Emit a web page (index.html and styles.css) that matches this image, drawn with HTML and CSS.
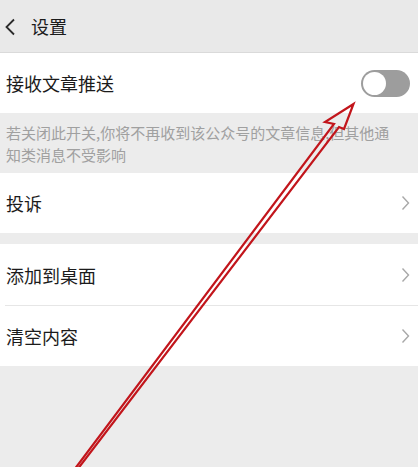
FILE: index.html
```html
<!DOCTYPE html>
<html lang="zh">
<head>
<meta charset="utf-8">
<link rel="stylesheet" href="styles.css">
</head>
<body>
<div class="page">
  <header class="topbar">
    <svg class="back" width="12" height="18" viewBox="0 0 12 18"><path d="M10 1.5 L2.5 9 L10 16.5" fill="none" stroke="#2b2b2b" stroke-width="1.8"/></svg>
    <span class="title">设置</span>
  </header>
  <div class="row">
    <span class="label">接收文章推送</span>
    <span class="toggle"><span class="knob"></span></span>
  </div>
  <div class="note">若关闭此开关,你将不再收到该公众号的文章信息,但其他通<br>知类消息不受影响</div>
  <div class="row">
    <span class="label">投诉</span>
    <svg class="chev" width="9" height="16" viewBox="0 0 9 16"><path d="M1.5 1.5 L7.5 8 L1.5 14.5" fill="none" stroke="#a8a8a8" stroke-width="1.4"/></svg>
  </div>
  <div class="gap"></div>
  <div class="group">
    <div class="row sep">
      <span class="label">添加到桌面</span>
      <svg class="chev" width="9" height="16" viewBox="0 0 9 16"><path d="M1.5 1.5 L7.5 8 L1.5 14.5" fill="none" stroke="#a8a8a8" stroke-width="1.4"/></svg>
    </div>
    <div class="row">
      <span class="label">清空内容</span>
      <svg class="chev" width="9" height="16" viewBox="0 0 9 16"><path d="M1.5 1.5 L7.5 8 L1.5 14.5" fill="none" stroke="#a8a8a8" stroke-width="1.4"/></svg>
    </div>
  </div>
  <svg class="arrow" width="418" height="467" viewBox="0 0 418 467">
    <polygon points="74,470 334,124 325,122 353.5,104 344,129 339,127 77,470" fill="none" stroke="#c2151b" stroke-width="2.2" stroke-linejoin="miter"/>
  </svg>
</div>
</body>
</html>
```
FILE: styles.css
```css
html, body {
  margin: 0;
  padding: 0;
}
body {
  background: #ececec;
  font-family: "Noto Sans CJK SC", "Noto Sans", sans-serif;
  color: #1b1b1b;
}
.page {
  position: relative;
  width: 418px;
  height: 467px;
  overflow: hidden;
  background: #ececec;
}
.topbar {
  background: #e9e9e9;
  border-bottom: 1px solid #dadada;
  display: flex;
  align-items: center;
  padding-left: 4px;
  box-sizing: border-box;
  height: 53px;
}
.back {
  display: block;
  margin-top: 1px;
}
.title {
  font-size: 18px;
  margin-left: 15px;
  line-height: 1;
}
.row {
  height: 60px;
  background: #fff;
  display: flex;
  align-items: center;
  justify-content: space-between;
  padding: 0 8px 0 6px;
  box-sizing: border-box;
}
.label {
  font-size: 18px;
  line-height: 1;
}
.toggle {
  position: relative;
  width: 49px;
  height: 27px;
  border-radius: 14px;
  background: #9d9d9d;
  margin-top: 1px;
}
.knob {
  position: absolute;
  left: 2px;
  top: 2px;
  width: 23px;
  height: 23px;
  border-radius: 50%;
  background: #fff;
}
.chev {
  display: block;
}
.note {
  height: 60px;
  box-sizing: border-box;
  padding: 9px 0 0 6px;
  font-size: 15px;
  line-height: 22px;
  color: #a0a0a0;
  white-space: nowrap;
}
.gap {
  height: 11px;
}
.group {
  background: #fff;
}
.sep {
  position: relative;
  height: 62px;
}
.sep::after {
  content: "";
  position: absolute;
  left: 5px;
  right: 0;
  bottom: 0;
  height: 1px;
  background: #e6e6e6;
}
.arrow {
  position: absolute;
  left: 0;
  top: 0;
  pointer-events: none;
}
```
